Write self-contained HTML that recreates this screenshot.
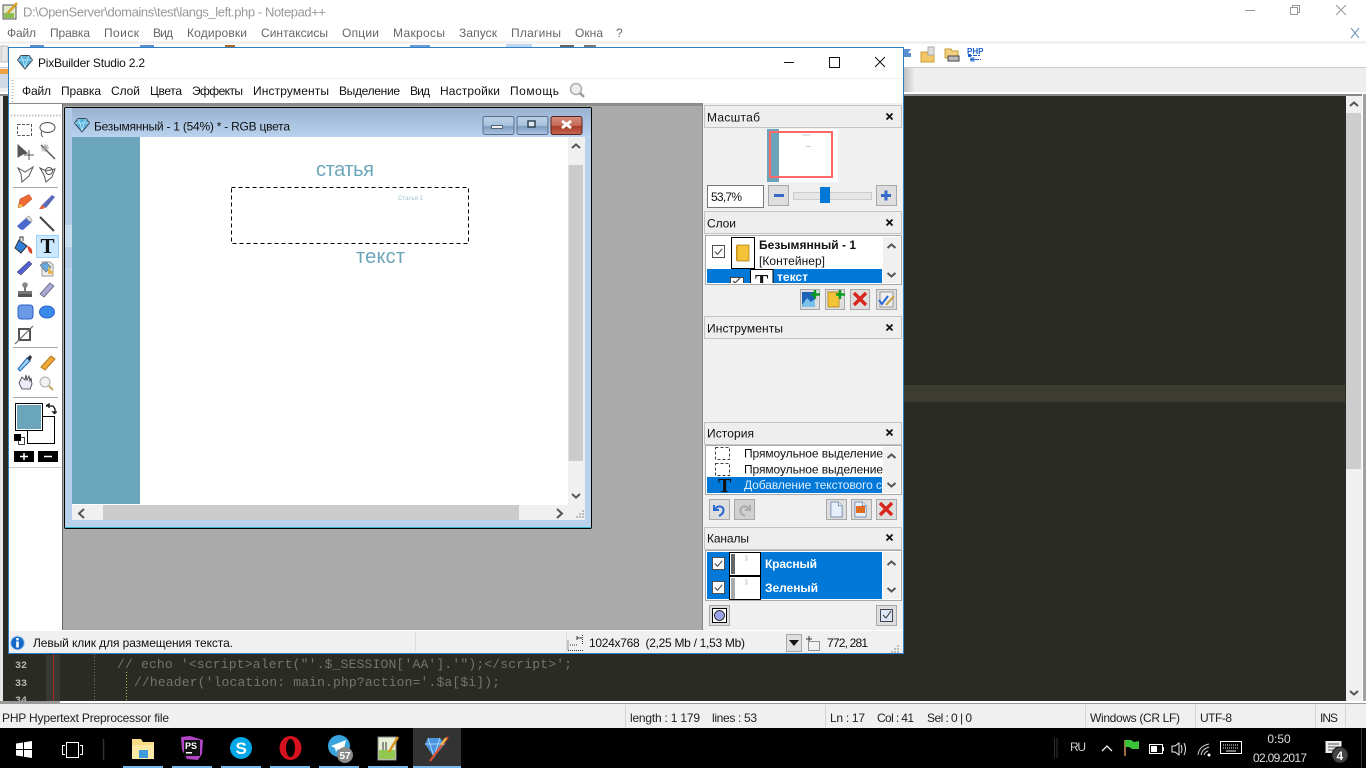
<!DOCTYPE html>
<html><head><meta charset="utf-8"><title>PixBuilder Studio</title>
<style>
html,body{margin:0;padding:0;width:1366px;height:768px;overflow:hidden;background:#000}
svg{display:block;position:absolute;left:0;top:0}
text{font-family:"Liberation Sans","Noto Sans CJK SC",sans-serif;font-size:12px;fill:#111;white-space:pre}
.n text{fill:#666}
.m{font-family:"Liberation Mono",monospace}
.b{font-weight:bold}
.btn{fill:#dedede;stroke:#a8a8a8}
.hd{fill:#eeeeee;stroke:#c4c4c4}
.st text{fill:#222}
</style></head><body>
<svg width="1366" height="768" viewBox="0 0 1366 768" xmlns="http://www.w3.org/2000/svg">
<defs>
<linearGradient id="tb" x1="0" y1="0" x2="0" y2="1"><stop offset="0" stop-color="#98b2d0"/><stop offset="1" stop-color="#b9d2ee"/></linearGradient>
<linearGradient id="bb" x1="0" y1="0" x2="0" y2="1"><stop offset="0" stop-color="#bcd2ea"/><stop offset=".5" stop-color="#a9c2dd"/><stop offset=".55" stop-color="#7f9dc0"/><stop offset="1" stop-color="#a9c4e2"/></linearGradient>
<linearGradient id="rb" x1="0" y1="0" x2="0" y2="1"><stop offset="0" stop-color="#d58e7e"/><stop offset=".5" stop-color="#c66a58"/><stop offset=".55" stop-color="#a83c28"/><stop offset="1" stop-color="#c86650"/></linearGradient>
<linearGradient id="sh" x1="0" y1="0" x2="1" y2="0"><stop offset="0" stop-color="#bbb"/><stop offset="1" stop-color="#eee"/></linearGradient>
<clipPath id="c1"><rect x="730" y="269" width="44" height="14"/></clipPath>
<symbol id="gem" viewBox="0 0 16 16"><path d="M4 1.500h8l3.500 4.500L8 15 .5 6z" fill="#5ab4dc" stroke="#3a4a5a"/><path d="M4 2 6 6l2 8 2-8 2-4M1 6h14" fill="none" stroke="#bfe8f8" stroke-width=".8"/></symbol>
<symbol id="up" viewBox="0 0 10 6"><path d="M1 5 5 1.500 9 5" fill="none" stroke="#555" stroke-width="2"/></symbol>
<symbol id="dn" viewBox="0 0 10 6"><path d="M1 1 5 4.500 9 1" fill="none" stroke="#555" stroke-width="2"/></symbol>
<symbol id="cx" viewBox="0 0 8 8"><path d="M1 1 7 7M7 1 1 7" stroke="#111" stroke-width="1.800"/></symbol>
<symbol id="chk" viewBox="0 0 14 14"><rect x=".5" y=".5" width="13" height="13" fill="#fff" stroke="#444"/><path d="M3 7l3 3 5-6" fill="none" stroke="#555" stroke-width="1.300"/></symbol>
<symbol id="dash" viewBox="0 0 15 13"><rect x=".5" y=".5" width="14" height="12" fill="none" stroke="#444" stroke-dasharray="3 2"/></symbol>
<symbol id="rx" viewBox="0 0 16 16"><path d="M2 2 14 14M14 2 2 14" stroke="#d9261c" stroke-width="3.400"/></symbol>
<symbol id="doc" viewBox="0 0 16 18"><path d="M2 1h8l4 4v12H2z" fill="#e6effa" stroke="#7a92b5"/><path d="M10 1v4h4" fill="#fff" stroke="#7a92b5"/></symbol>
</defs>

<!-- Notepad++ background -->
<rect width="1366" height="728" fill="#fff"/>
<rect y="41" width="1366" height="3" fill="#f1f1f1"/>
<rect y="67" width="1366" height="1" fill="#ccc"/>
<rect y="68" width="1366" height="24" fill="#eeeeee"/>
<rect x="903" y="68" width="12" height="24" fill="url(#sh)"/>
<rect y="94" width="1366" height="2" fill="#8a8a8a"/>
<rect y="96" width="1346" height="605" fill="#2a2b24"/>
<rect x="0" y="96" width="3" height="605" fill="#e6e6e6"/>
<rect x="903" y="385" width="442" height="17" fill="#3c3c31"/>
<rect x="1346" y="96" width="16" height="605" fill="#f0f0f0"/>
<rect x="1346" y="113" width="15" height="356" fill="#cdcdcd"/>
<rect x="1362" y="94" width="1" height="608" fill="#fff"/>
<rect x="1363" y="94" width="3" height="608" fill="#a0a0a0"/>
<use href="#up" x="1349" y="101" width="10" height="6"/>
<use href="#dn" x="1349" y="690" width="10" height="6"/>
<rect y="701" width="1366" height="2" fill="#fff"/>
<rect y="703" width="1366" height="1" fill="#9a9a9a"/>

<!-- NPP title -->
<rect x="3" y="5" width="13" height="14" fill="#dfe8c8" stroke="#555"/>
<path d="M6 15 17 3" stroke="#d8a020" stroke-width="2.500"/>
<rect x="4" y="13" width="10" height="5" fill="#8cbc50"/>
<text x="23" y="16.500" style="fill:#999;font-size:13px" textLength="303">D:\OpenServer\domains\test\langs_left.php - Notepad++</text>
<g class="n">
<text x="7" y="37" textLength="29">Файл</text>
<text x="50" y="37" textLength="40">Правка</text>
<text x="104" y="37" textLength="35">Поиск</text>
<text x="153" y="37" textLength="20">Вид</text>
<text x="187" y="37" textLength="60">Кодировки</text>
<text x="261" y="37" textLength="67">Синтаксисы</text>
<text x="342" y="37" textLength="37">Опции</text>
<text x="393" y="37" textLength="52">Макросы</text>
<text x="459" y="37" textLength="38">Запуск</text>
<text x="511" y="37" textLength="50">Плагины</text>
<text x="575" y="37" textLength="28">Окна</text>
<text x="616" y="37">?</text>
</g>
<path d="M1245 10.500h10" stroke="#999"/>
<path d="M1290.500 7.500h7v7h-7zM1292.500 7.500v-2h7v7h-2" fill="none" stroke="#999"/>
<path d="M1336 5 1346 15M1346 5 1336 15" stroke="#999"/>
<path d="M1351 28 1359 38M1359 28 1351 38" stroke="#7a9cc0" stroke-width="1.200"/>
<!-- NPP toolbar peeks -->
<rect x="506" y="44" width="26" height="3" fill="#bcd7ef"/>
<rect x="560" y="45" width="14" height="2" fill="#666"/><rect x="584" y="45" width="12" height="2" fill="#777"/>
<rect x="30" y="45" width="14" height="2" fill="#5a8fd0"/><rect x="140" y="45" width="14" height="2" fill="#5a8fd0"/><rect x="225" y="45" width="10" height="2" fill="#a86a20"/><rect x="410" y="45" width="20" height="2" fill="#6a9ad8"/>
<rect x="1" y="46" width="7" height="16" fill="#e6e6e6" stroke="#bbb"/>
<rect x="0" y="69" width="8" height="5" fill="#f0a040"/>
<rect x="0" y="74" width="8" height="14" fill="#cfd8e4"/>
<path d="M904 49h7l-3 4h3v4h-7z" fill="#5b8ed0"/>
<path d="M921 52h6l1 2h6v8h-13z" fill="#f3c667" stroke="#c6a23a"/><rect x="928" y="47" width="6" height="8" fill="#ddd" stroke="#aaa"/>
<path d="M945 49h6l1 2h6v7h-13z" fill="#f3cf80" stroke="#c6a23a"/><rect x="948" y="56" width="11" height="5" fill="#bbb" stroke="#444"/>
<text x="967" y="54" class="b" style="font-size:8px;fill:#1c5fd0">PHP</text>
<path d="M968 55.500h12M970 59.500h11" stroke="#1c5fd0" stroke-dasharray="4 1"/>
<rect x="968" y="54" width="3" height="3" fill="#1c5fd0"/><rect x="971" y="58" width="3" height="3" fill="none" stroke="#1c5fd0"/>

<!-- Code lines -->
<rect x="46" y="655" width="14" height="46" fill="#3a3a34"/>
<path d="M53.500 654v47" stroke="#a52a22"/>
<path d="M94.500 654v47" stroke="#77776a" stroke-dasharray="1 2"/>
<path d="M126.500 672v29" stroke="#c8b84a" stroke-dasharray="1 2"/>
<text x="15" y="668" class="m b" style="fill:#b8b8b0;font-size:10px">32</text>
<text x="15" y="686" class="m b" style="fill:#b8b8b0;font-size:10px">33</text>
<text x="15" y="703" class="m b" style="fill:#b8b8b0;font-size:10px">34</text>
<rect x="0" y="701" width="60" height="3" fill="#9a9a9a"/>
<text x="117" y="668" class="m" style="fill:#75756a;font-size:13px" textLength="455">// echo '&lt;script&gt;alert("'.$_SESSION['AA'].'");&lt;/script&gt;';</text>
<text x="134" y="686" class="m" style="fill:#75756a;font-size:13px" textLength="366">//header('location: main.php?action='.$a[$i]);</text>

<!-- NPP status -->
<rect y="704" width="1366" height="24" fill="#f0f0f0"/>
<g stroke="#d4d4d4"><path d="M625.500 705v22M825.500 705v22M1085.500 705v22M1195.500 705v22M1315.500 705v22M1345.500 705v22"/></g>
<g class="st">
<text x="2" y="722" textLength="167">PHP Hypertext Preprocessor file</text>
<text x="630" y="722" textLength="70">length : 1 179</text>
<text x="712" y="722" textLength="45">lines : 53</text>
<text x="830" y="722" textLength="35">Ln : 17</text>
<text x="877" y="722" textLength="37">Col : 41</text>
<text x="927" y="722" textLength="45">Sel : 0 | 0</text>
<text x="1090" y="722" textLength="90">Windows (CR LF)</text>
<text x="1200" y="722" textLength="32">UTF-8</text>
<text x="1320" y="722" textLength="18">INS</text>
</g>

<!-- Taskbar -->
<rect y="728" width="1366" height="40" fill="#000"/>
<rect x="413" y="728" width="48" height="40" fill="#333"/>
<g fill="#76b9ed"><rect x="123" y="766" width="40" height="2"/><rect x="172" y="766" width="40" height="2"/><rect x="221" y="766" width="40" height="2"/><rect x="270" y="766" width="40" height="2"/><rect x="319" y="766" width="40" height="2"/><rect x="368" y="766" width="40" height="2"/><rect x="413" y="766" width="48" height="2"/></g>
<path d="M16 743.500 23 742.500v6.500h-7zM24 742.300 32 741v8h-8zM16 750h7v6.500l-7-1zM24 750h8v8l-8-1.200z" fill="#fff"/>
<rect x="66.500" y="742.500" width="12" height="15" fill="none" stroke="#fff"/>
<path d="M65 745.500h-2.500v9H65M80 745.500h2.500v9H80" fill="none" stroke="#fff"/>
<path d="M103.500 739v21" stroke="#333" stroke-width="1.500"/>
<!-- explorer -->
<path d="M132 739h9l2 3h11v17h-22z" fill="#f7dc84"/><rect x="132" y="745" width="22" height="14" fill="#fbe9a5"/><rect x="139" y="750" width="9" height="8" fill="#3e9ad8"/>
<!-- PhpStorm -->
<path d="M181 737l9-1 13 4-1 14-4 6-11-1-5-9z" fill="#b345c9"/><rect x="184" y="740" width="16" height="16" fill="#111"/>
<text x="185" y="749" class="b" style="fill:#fff;font-size:9px">PS</text><rect x="186" y="752" width="6" height="1.500" fill="#fff"/>
<!-- Skype -->
<circle cx="241" cy="748" r="11" fill="#00a8e8"/><text x="235.500" y="754" class="b" style="fill:#fff;font-size:17px">S</text>
<!-- Opera -->
<ellipse cx="290.500" cy="748" rx="11" ry="12" fill="#d6121f"/><ellipse cx="290.500" cy="748" rx="4.500" ry="9" fill="#000"/>
<!-- Telegram -->
<circle cx="339" cy="746" r="11" fill="#3aa5dc"/><path d="M331 746 346 740 343 753 338 749 336 752 335 748z" fill="#fff"/>
<circle cx="345" cy="755" r="8" fill="#8a8a8a"/><text x="339.500" y="759" class="b" style="fill:#fff;font-size:10px">57</text>
<!-- NPP -->
<rect x="378" y="737" width="18" height="23" fill="#e9f0d8" stroke="#888"/><rect x="379" y="750" width="16" height="9" fill="#90c850"/><path d="M383 742v8M386 742v8" stroke="#333"/><path d="M389 752 398 737" stroke="#d89820" stroke-width="2.500"/>
<!-- Pix -->
<path d="M428 738h12l5 6-11 13-9-13z" fill="#4a94e0"/><path d="M428 738l2 6 4 13 4-13 2-6M425 744h20" fill="none" stroke="#bfe3ff" stroke-width=".8"/><path d="M430 761 448 737" stroke="#e05030" stroke-width="2"/><path d="M441 745l5-7" stroke="#f0c050" stroke-width="2"/>
<!-- Tray -->
<path d="M1054.500 738v20M1057 738v20" stroke="#333"/>
<text x="1070" y="751" style="fill:#ccc" textLength="16">RU</text>
<path d="M1102 751l5-5 5 5" fill="none" stroke="#eee" stroke-width="1.300"/>
<path d="M1125 740v16" stroke="#d09050" stroke-width="1.500"/><path d="M1125 740h6l3 2 5-1v8h-7l-3-2h-4z" fill="#3bc43b"/>
<rect x="1149.500" y="744.500" width="13" height="9" fill="none" stroke="#fff"/><rect x="1151" y="746" width="6" height="6" fill="#fff"/><rect x="1163" y="747" width="1" height="4" fill="#fff"/>
<path d="M1172 746h3l4-3v12l-4-3h-3z" fill="none" stroke="#eee"/><path d="M1181 745q2 4 0 8M1184 743q3 6 0 12" fill="none" stroke="#eee"/>
<path d="M1198 755q1-9 11-11M1201 755q1-6 8-8M1204 755q1-3 4-4" fill="none" stroke="#ccc"/><circle cx="1209" cy="755" r="1.500" fill="#fff"/>
<rect x="1220.500" y="741.500" width="21" height="12" fill="none" stroke="#fff"/><path d="M1223 745h16M1223 748h16" stroke="#eee" stroke-dasharray="1 1"/><path d="M1226 751h10" stroke="#eee"/>
<text x="1279" y="743" text-anchor="middle" style="fill:#ddd;font-size:12px">0:50</text>
<text x="1253" y="762" style="fill:#ddd;font-size:12px" textLength="54">02.09.2017</text>
<path d="M1325.500 741h16v12h-16z" fill="#eee"/><path d="M1328 744h11M1328 747h11M1328 750h8" stroke="#555"/>
<circle cx="1340" cy="755" r="8" fill="#444" stroke="#111"/><text x="1336.500" y="760" class="b" style="fill:#fff;font-size:12px">4</text>
<path d="M1361.500 728v40" stroke="#333"/>

<!-- PixBuilder window -->
<rect x="8.500" y="47.500" width="895" height="606" fill="#f0f0f0" stroke="#2f7fc8"/>
<rect x="9" y="48" width="894" height="55" fill="#fff"/>
<rect x="9" y="78" width="894" height="1" fill="#f0f0f0"/>
<use href="#gem" x="17" y="54" width="16" height="16"/>
<text x="38" y="67" textLength="107">PixBuilder Studio 2.2</text>
<path d="M784 62.500h10" stroke="#111"/>
<rect x="829.500" y="57.500" width="10" height="10" fill="none" stroke="#111"/>
<path d="M875 57 885 67M885 57 875 67" stroke="#111"/>
<path d="M12.500 80v23" stroke="#bbb" stroke-dasharray="1 2" stroke-width="2"/>
<text x="22" y="95" textLength="29">Файл</text>
<text x="61" y="95" textLength="40">Правка</text>
<text x="111" y="95" textLength="29">Слой</text>
<text x="150" y="95" textLength="32">Цвета</text>
<text x="192" y="95" textLength="51">Эффекты</text>
<text x="253" y="95" textLength="76">Инструменты</text>
<text x="339" y="95" textLength="61">Выделение</text>
<text x="410" y="95" textLength="20">Вид</text>
<text x="440" y="95" textLength="60">Настройки</text>
<text x="510" y="95" textLength="49">Помощь</text>
<circle cx="576" cy="89" r="5.500" fill="#eee" stroke="#aaa" stroke-width="1.500"/><path d="M580 93l4 4" stroke="#999" stroke-width="2.500"/>

<!-- Workspace -->
<rect x="63" y="104" width="640" height="526" fill="#aaaaaa"/>
<rect x="9" y="103" width="694" height="1" fill="#8a8a8a"/>
<rect x="62" y="104" width="1" height="526" fill="#666"/>
<rect x="63" y="104" width="640" height="2" fill="#8c8c8c"/>
<rect x="9" y="104" width="53" height="526" fill="#fff"/>
<rect x="702" y="104" width="1" height="526" fill="#888"/>
<path d="M11 115.500h50" stroke="#c4c4c4" stroke-dasharray="1.500 1.500" stroke-width="2"/>

<!-- Tools -->
<g fill="none" stroke="#555">
<rect x="17.500" y="124.500" width="14" height="11" stroke-dasharray="3 1.500"/>
<ellipse cx="47.500" cy="127.500" rx="7.500" ry="5"/><path d="M42 131q-2 4 1 6"/>
<path d="M18 145v12l5-3 4-1z" fill="#555"/><path d="M29 150v10M24 155h10"/>
<path d="M41 145l14 14" stroke-width="1.500"/><path d="M45 144v8M41 148h8M42 145l6 6M48 145l-6 6" stroke="#999"/>
<path d="M18 168l7 4 8-5-4 9-7 6-1-8z"/>
<path d="M40 168l6 3 9-2-3 8-6 5-2-7z"/><circle cx="49" cy="171" r="3.500"/>
</g>
<path d="M13 187.500h45" stroke="#aaa"/>
<path d="M20 199 29 194.500 32 199 24 206 18 208z" fill="#f06a38" stroke="#b04020" stroke-width=".5"/><path d="M18 208l2-4 3 2z" fill="#f5d040"/>
<path d="M41 206 52 195l3 2-9 11z" fill="#5a6ab8"/><path d="M39 209l3-4 3 2-2 2z" fill="#e0603a"/>
<path d="M17 226 26 218l6 4-9 8q-3 0-6-4z" fill="#4a6acc"/><path d="M26 218l3-2 3 4-1 2z" fill="#e8e8e8" stroke="#aaa"/>
<path d="M40 217 54 231" stroke="#444" stroke-width="2"/>
<path d="M19 240l8 6-6 7-6-5z" fill="#2f7fd8" stroke="#333"/><path d="M27 246q6 1 5 8l-3-2z" fill="#e0402c"/><path d="M20 240v-3h3v4" fill="none" stroke="#333"/>
<rect x="36.500" y="235.500" width="22" height="22" fill="#cce8ff" stroke="#99d1ff"/>
<text x="40.500" y="253" style="font-family:'Liberation Serif',serif;font-size:21px;font-weight:bold;fill:#111">T</text>
<path d="M17 272l12-11 3 3-11 11z" fill="#5560d0" stroke="#333" stroke-width=".5"/>
<path d="M42 262h8l3 3v11H42z" fill="#eee" stroke="#999"/><path d="M40 265l6-3 5 5-5 5z" fill="#6aa8e0" stroke="#666" stroke-width=".6"/><path d="M48 266l6 8h-6z" fill="#e8b850"/>
<circle cx="25" cy="285" r="2.800" fill="#888"/><path d="M24 287h2v4h-2zM18 291h14v3H18z" fill="#777"/><rect x="18" y="294" width="14" height="3" fill="#555"/>
<path d="M40 294 50 283l4 3-10 11z" fill="#a9a9d8" stroke="#556" stroke-width=".7"/>
<rect x="18" y="305" width="15" height="14" rx="3" fill="#6a9ae8" stroke="#2a60c8"/>
<ellipse cx="47" cy="312" rx="7.500" ry="6" fill="#3a8aec" stroke="#2a60c8"/>
<rect x="19" y="329" width="11" height="11" fill="none" stroke="#555" stroke-width="2"/><path d="M15 344 33 326" stroke="#666" stroke-width="1.200"/>
<path d="M13 347.500h45" stroke="#aaa"/>
<path d="M18 369 27 358l3 3-10 10z" fill="#9fd0f0" stroke="#1a6ac0"/><path d="M27 358l3-3 2 2-2 4z" fill="#334"/>
<path d="M41 367l10-11 4 3-10 11z" fill="#f0a838" stroke="#b07818"/>
<path d="M19 383l3 6h8l2-5-1-6-1 3-1-5-2 4-1-5-1 5-3-3z" fill="#ecebf8" stroke="#333" stroke-width=".8"/>
<circle cx="45" cy="382" r="5" fill="#f2f2f2" stroke="#aaa"/><path d="M49 386l4 4" stroke="#c8a868" stroke-width="2"/>
<path d="M13 397.500h45" stroke="#aaa"/>
<rect x="27.500" y="416.500" width="27" height="27" fill="#fff" stroke="#000"/>
<rect x="15.500" y="403.500" width="27" height="27" fill="#6ba5b9" stroke="#000"/>
<rect x="16.500" y="404.500" width="25" height="25" fill="#6ba5b9" stroke="#fff"/>
<path d="M46 406h7l2 3v5M46 406l3-2v4M55 414l-2-2h4" fill="none" stroke="#111" stroke-width="1.300"/>
<rect x="18.500" y="437.500" width="6" height="7" fill="#fff" stroke="#444"/>
<rect x="14" y="434" width="7" height="7" fill="#000"/>
<rect x="14" y="451" width="20" height="11" fill="#000"/><path d="M20 456.500h8M24 453v7" stroke="#fff" stroke-width="1.500"/>
<rect x="38" y="451" width="20" height="11" fill="#000"/><path d="M44 456.500h8" stroke="#fff" stroke-width="1.500"/>
<path d="M9 467.500h53" stroke="#ccc"/>

<!-- Document window -->
<rect x="64" y="107" width="528" height="422" fill="#000" rx="2"/>
<rect x="65" y="108" width="526" height="419" fill="#b8d1ed"/>
<rect x="65" y="108" width="526" height="29" fill="url(#tb)"/>
<rect x="65" y="527" width="526" height="1" fill="#36b4c8"/>
<rect x="65" y="108" width="7" height="160" fill="#b2cbe6"/><rect x="65" y="225" width="7" height="22" fill="#c8dcf0"/>
<use href="#gem" x="74" y="117" width="16" height="16"/>
<text x="94" y="130.500" textLength="196">Безымянный - 1 (54%) * - RGB цвета</text>
<rect x="483" y="116.500" width="31" height="18" rx="2" fill="url(#bb)" stroke="#5a6e8a"/>
<rect x="491.500" y="125.500" width="11" height="3" fill="#eee" stroke="#567"/>
<rect x="517" y="116.500" width="31" height="18" rx="2" fill="url(#bb)" stroke="#5a6e8a"/>
<rect x="528" y="121" width="7" height="6" fill="#dfe8f2" stroke="#345" stroke-width="1.500"/>
<rect x="551" y="116.500" width="31" height="18" rx="2" fill="url(#rb)" stroke="#5a2222"/>
<path d="M562 121l9 7M571 121l-9 7" stroke="#fff" stroke-width="2.800"/>

<rect x="72" y="137" width="513" height="383" fill="#f0f0f0"/>
<rect x="72" y="137" width="496" height="368" fill="#fff"/>
<rect x="72" y="137" width="68" height="367" fill="#6ba5b9"/>
<rect x="568.500" y="165" width="14.500" height="296" fill="#cbcbcb"/>
<rect x="103" y="505" width="416" height="15" fill="#cccccc"/>
<use href="#up" x="571" y="143" width="10" height="6"/>
<use href="#dn" x="571" y="493" width="10" height="6"/>
<path d="M84 509 79 513.500 84 518" fill="none" stroke="#555" stroke-width="2"/>
<path d="M557 509 562 513.500 557 518" fill="none" stroke="#555" stroke-width="2"/>
<path d="M582 510h2v2h-2zM579 513h2v2h-2zM582 513h2v2h-2zM576 516h2v2h-2zM579 516h2v2h-2zM582 516h2v2h-2z" fill="#bbb"/>

<text x="316" y="176" style="font-size:20px;fill:#6ba5b9" textLength="58">статья</text>
<text x="356" y="263" style="font-size:20px;fill:#6ba5b9" textLength="49">текст</text>
<text x="398" y="200" style="font-size:6px;fill:#9cc0cc" textLength="25">Статья 1</text>
<rect x="231.500" y="187.500" width="237" height="56" fill="none" stroke="#000" stroke-dasharray="4 3"/>

<!-- Right panels -->
<rect x="703" y="104" width="200" height="526" fill="#f0f0f0"/>
<!-- Масштаб -->
<rect x="704.500" y="105.500" width="197" height="22" class="hd"/>
<text x="707" y="121.500" textLength="53">Масштаб</text>
<use href="#cx" x="885.500" y="112.500" width="8" height="8"/>
<rect x="767" y="129" width="71" height="53" fill="#fff"/>
<rect x="767" y="129" width="12" height="53" fill="#6ba5b9"/>
<rect x="770" y="132" width="62" height="45" fill="none" stroke="#ff6666" stroke-width="2"/>
<path d="M802 135h8M806 146.500h5" stroke="#bcd0d8"/>
<rect x="707.500" y="185.500" width="56" height="22" fill="#fff" stroke="#777"/>
<text x="711" y="201" textLength="31">53,7%</text>
<rect x="768.500" y="185.500" width="20" height="20" class="btn"/>
<rect x="774" y="194" width="10" height="3" fill="#3a6ac8"/>
<rect x="793.500" y="192.500" width="78" height="7" fill="#e6e6e6" stroke="#ccc"/>
<rect x="820" y="187" width="10" height="16" fill="#0078d7"/>
<rect x="876.500" y="185.500" width="20" height="20" class="btn"/>
<path d="M881 195.500h10M886 190.500v10" stroke="#3a6ac8" stroke-width="3"/>
<!-- Слои -->
<rect x="704.500" y="211.500" width="197" height="22" class="hd"/>
<text x="707" y="227.500" textLength="29">Слои</text>
<use href="#cx" x="885.500" y="218.500" width="8" height="8"/>
<rect x="705.500" y="235.500" width="196" height="49" fill="#fff" stroke="#aaa"/>
<rect x="883" y="237" width="17" height="46" fill="#f0f0f0"/>
<use href="#chk" x="712" y="245" width="13" height="13"/>
<rect x="731.500" y="237.500" width="23" height="31" fill="#fff" stroke="#000"/>
<path d="M737 245h12v16h-12z" fill="#f5c338" stroke="#a87810" stroke-width=".7"/><path d="M737 245v16l-1-1v-14z" fill="#c89018"/>
<text x="759" y="249" class="b" textLength="97">Безымянный - 1</text>
<text x="759" y="265" textLength="66">[Контейнер]</text>
<rect x="707" y="269" width="175" height="14" fill="#0078d7"/>
<g clip-path="url(#c1)">
<rect x="730.500" y="277.500" width="13" height="13" fill="#fff" stroke="#444"/>
<path d="M733 281l2 2 5-5" fill="none" stroke="#555" stroke-width="1.300"/>
<rect x="750.500" y="269.500" width="22.500" height="20" fill="#fff" stroke="#000"/>
<text x="755" y="288" style="font-family:'Liberation Serif',serif;font-size:20px;font-weight:bold;fill:#111">T</text>
</g>
<text x="777" y="281" class="b" style="fill:#fff" textLength="31">текст</text>
<use href="#up" x="886.500" y="243" width="10" height="6"/>
<use href="#dn" x="886.500" y="272" width="10" height="6"/>
<rect x="800.500" y="289.500" width="19" height="20" class="btn"/>
<path d="M802 292h13v15h-13z" fill="#1c62b8"/><path d="M802 305l5-7 4 4 4-3v8h-13z" fill="#7ac0e8"/><path d="M815 290v9M811 294.500h9" stroke="#0a9a20" stroke-width="2.400"/>
<rect x="825.500" y="289.500" width="19" height="20" class="btn"/>
<path d="M828 292h11v15h-11z" fill="#f5c338" stroke="#a87810" stroke-width=".7"/><path d="M840 290v9M836 294.500h9" stroke="#0a9a20" stroke-width="2.400"/>
<rect x="850.500" y="289.500" width="19" height="20" class="btn"/>
<use href="#rx" x="852" y="291" width="16" height="16"/>
<rect x="876.500" y="289.500" width="20" height="20" class="btn"/>
<rect x="880" y="292" width="13" height="15" fill="#eee" stroke="#999"/><path d="M879 300l3 4 6-8" fill="none" stroke="#2a6ad0" stroke-width="2"/><path d="M886 305l8-9" stroke="#c8a040" stroke-width="2"/>
<!-- Инструменты -->
<rect x="704.500" y="316.500" width="197" height="22" class="hd"/>
<text x="707" y="332.500" textLength="76">Инструменты</text>
<use href="#cx" x="885.500" y="323.500" width="8" height="8"/>
<!-- История -->
<rect x="704.500" y="422.500" width="197" height="22" class="hd"/>
<text x="707" y="437.500" textLength="47">История</text>
<use href="#cx" x="885.500" y="428.500" width="8" height="8"/>
<rect x="705.500" y="445.500" width="196" height="49" fill="#fff" stroke="#aaa"/>
<rect x="883" y="447" width="17" height="46" fill="#f0f0f0"/>
<use href="#dash" x="715" y="447" width="15" height="13"/>
<use href="#dash" x="715" y="463" width="15" height="13"/>
<text x="744" y="457.500" textLength="139">Прямоульное выделение</text>
<text x="744" y="473.500" textLength="139">Прямоульное выделение</text>
<rect x="707" y="477" width="175" height="16" fill="#0078d7"/>
<text x="718" y="492" style="font-family:'Liberation Serif',serif;font-size:20px;font-weight:bold;fill:#111">T</text>
<text x="744" y="489" style="fill:#dcecff" textLength="138">Добавление текстового с</text>
<use href="#up" x="886.500" y="453" width="10" height="6"/>
<use href="#dn" x="886.500" y="482" width="10" height="6"/>
<rect x="709.500" y="499.500" width="20" height="20" class="btn"/>
<path d="M714 505v5h5M714 510q5-6 9-2 2 5-4 8" fill="none" stroke="#2a6ad0" stroke-width="2"/>
<rect x="734.500" y="499.500" width="20" height="20" class="btn" style="fill:#d0d0d0"/>
<path d="M750 505v5h-5M750 510q-5-6-9-2-2 5 4 8" fill="none" stroke="#aaa" stroke-width="2"/>
<rect x="826.500" y="499.500" width="20" height="20" class="btn"/>
<use href="#doc" x="829" y="501" width="15" height="17"/>
<rect x="851.500" y="499.500" width="20" height="20" class="btn"/>
<use href="#doc" x="853" y="501" width="15" height="17"/><rect x="856" y="506" width="9" height="7" fill="#e06a20"/>
<rect x="876.500" y="499.500" width="20" height="20" class="btn"/>
<use href="#rx" x="878" y="501" width="16" height="16"/>
<!-- Каналы -->
<rect x="704.500" y="527.500" width="197" height="22" class="hd"/>
<text x="707" y="542.500" textLength="42">Каналы</text>
<use href="#cx" x="885.500" y="533.500" width="8" height="8"/>
<rect x="705.500" y="550.500" width="196" height="50" fill="#fff" stroke="#aaa"/>
<rect x="883" y="552" width="17" height="47" fill="#f0f0f0"/>
<rect x="707" y="552" width="175" height="47" fill="#0078d7"/>
<use href="#chk" x="712" y="557" width="13" height="13"/>
<use href="#chk" x="712" y="581" width="13" height="13"/>
<rect x="729.500" y="552.500" width="31" height="23" fill="#fff" stroke="#000"/>
<rect x="731" y="554" width="4" height="20" fill="#666"/>
<rect x="745" y="555" width="3" height="6" fill="#e4e4e4"/>
<rect x="729.500" y="576.500" width="31" height="23" fill="#fff" stroke="#000"/>
<rect x="731" y="578" width="4" height="21" fill="#aaa"/>
<rect x="745" y="579" width="3" height="6" fill="#e4e4e4"/>
<text x="765" y="568" class="b" style="fill:#fff" textLength="52">Красный</text>
<text x="765" y="592" class="b" style="fill:#fff" textLength="53">Зеленый</text>
<use href="#up" x="886.500" y="560" width="10" height="6"/>
<use href="#dn" x="886.500" y="587" width="10" height="6"/>
<rect x="709.500" y="605.500" width="20" height="20" class="btn"/>
<rect x="712.500" y="608.500" width="14" height="14" fill="#fff" stroke="#000"/><circle cx="719.500" cy="615.500" r="5" fill="#9aa4ea" stroke="#333"/>
<rect x="876.500" y="605.500" width="20" height="20" class="btn"/>
<rect x="880.500" y="609.500" width="12" height="12" fill="#dde6f5" stroke="#445"/><path d="M883 615l3 3 5-7" fill="none" stroke="#333"/>

<!-- PixBuilder status -->
<rect x="9" y="630" width="894" height="23" fill="#f0f0f0"/>
<rect x="9" y="630" width="894" height="1" fill="#fff"/>
<path d="M415.500 632v20M566.500 632v20" stroke="#dcdcdc"/>
<circle cx="17.500" cy="643" r="6.800" fill="#1468c8" stroke="#a8ccf0"/><rect x="16.200" y="641.500" width="2.600" height="6" fill="#fff"/><rect x="16.200" y="638" width="2.600" height="2.400" fill="#fff"/>
<text x="33" y="647" textLength="200">Левый клик для размещения текста.</text>
<path d="M568 650.500h15M568 640.500v10M582.500 635v10M570 645h8" fill="none" stroke="#333" stroke-dasharray="1 1"/>
<path d="M577 638h5M577 636v4" stroke="#333"/>
<text x="589" y="647" textLength="156">1024x768  (2,25 Mb / 1,53 Mb)</text>
<rect x="786.500" y="634.500" width="15" height="17" class="btn"/>
<path d="M789 640h10l-5 6z" fill="#111"/>
<rect x="808.500" y="641.500" width="11" height="9" fill="none" stroke="#333" stroke-dasharray="1 1"/><path d="M806 639h6M809 636v6" stroke="#333"/>
<text x="827" y="647" textLength="41">772, 281</text>
<path d="M897 645h2v2h-2zM894 648h2v2h-2zM897 648h2v2h-2zM891 651h2v2h-2zM894 651h2v2h-2zM897 651h2v2h-2z" fill="#bbb"/>
<rect x="8" y="653" width="896" height="1" fill="#2f7fc8"/>
</svg>
</body></html>
